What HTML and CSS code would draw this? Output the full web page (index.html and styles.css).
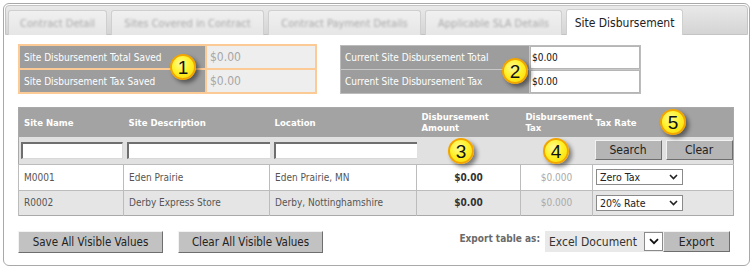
FILE: index.html
```html
<!DOCTYPE html>
<html>
<head>
<meta charset="utf-8">
<link rel="stylesheet" href="styles.css">
</head>
<body>
<div class="panel">
  <div class="tabbar">
    <div class="tab t1"><span>Contract Detail</span></div>
    <div class="tab t2"><span>Sites Covered in Contract</span></div>
    <div class="tab t3"><span>Contract Payment Details</span></div>
    <div class="tab t4"><span>Applicable SLA Details</span></div>
    <div class="tab active">Site Disbursement</div>
  </div>
  <div class="content">
    <div class="summary">
      <div class="box saved">
        <div class="lbl">Site Disbursement Total Saved</div><div class="val">$0.00</div>
        <div class="lbl">Site Disbursement Tax Saved</div><div class="val">$0.00</div>
      </div>
      <div class="box current">
        <div class="lbl">Current Site Disbursement Total</div><div class="val">$0.00</div>
        <div class="lbl">Current Site Disbursement Tax</div><div class="val">$0.00</div>
      </div>
    </div>
    <table class="grid">
      <colgroup>
        <col class="c1"><col class="c2"><col class="c3"><col class="c4"><col class="c5"><col class="c6">
      </colgroup>
      <thead>
        <tr class="head">
          <th>Site Name</th>
          <th>Site Description</th>
          <th>Location</th>
          <th>Disbursement<br>Amount</th>
          <th>Disbursement<br>Tax</th>
          <th class="rate">Tax Rate</th>
        </tr>
        <tr class="filter">
          <td class="f1"><span class="inp"></span></td>
          <td class="f2"><span class="inp"></span></td>
          <td class="f3"><span class="inp"></span></td>
          <td></td>
          <td></td>
          <td class="fbtns"><div class="btnrow"><span class="btn sbtn">Search</span><span class="btn sbtn">Clear</span></div></td>
        </tr>
      </thead>
      <tbody>
        <tr class="row">
          <td>M0001</td>
          <td>Eden Prairie</td>
          <td>Eden Prairie, MN</td>
          <td class="amt">$0.00</td>
          <td class="tax">$0.000</td>
          <td class="sel"><span class="select">Zero Tax<svg class="chev" width="9" height="6" viewBox="0 0 9 6"><path d="M1 1l3.5 3.5L8 1" fill="none" stroke="#222" stroke-width="1.6"/></svg></span></td>
        </tr>
        <tr class="row alt">
          <td>R0002</td>
          <td>Derby Express Store</td>
          <td>Derby, Nottinghamshire</td>
          <td class="amt">$0.00</td>
          <td class="tax">$0.000</td>
          <td class="sel"><span class="select">20% Rate<svg class="chev" width="9" height="6" viewBox="0 0 9 6"><path d="M1 1l3.5 3.5L8 1" fill="none" stroke="#222" stroke-width="1.6"/></svg></span></td>
        </tr>
      </tbody>
    </table>
    <div class="footer">
      <div class="actions">
        <span class="btn big">Save All Visible Values</span>
        <span class="btn big">Clear All Visible Values</span>
      </div>
      <div class="export">
        <span class="exlabel">Export table as:</span>
        <span class="exsel">Excel Document<span class="exchev"><svg width="10" height="7" viewBox="0 0 10 7"><path d="M1 1.2l4 4 4-4" fill="none" stroke="#111" stroke-width="1.8"/></svg></span></span>
        <span class="btn exbtn">Export</span>
      </div>
    </div>
  </div>
  <span class="badge b1">1</span>
  <span class="badge b2">2</span>
  <span class="badge b3">3</span>
  <span class="badge b4">4</span>
  <span class="badge b5">5</span>
</div>
</body>
</html>
```

FILE: styles.css
```css
html, body {
  margin: 0;
  padding: 0;
  background: #ffffff;
}
body {
  font-family: "DejaVu Sans Condensed", "DejaVu Sans", sans-serif;
  font-stretch: condensed;
  color: #444;
}
.panel {
  position: relative;
  margin: 3px 2px 0 3px;
  height: 261px;
  border: 1px solid #a9a9a9;
  border-radius: 6px;
  box-sizing: border-box;
  height: 263px;
}
.tabbar {
  display: flex;
  align-items: flex-end;
  gap: 4px;
  margin: 1px;
  height: 30px;
  box-sizing: border-box;
  padding: 0 0 0 2px;
  background: linear-gradient(#e9e9e9, #d4d4d4);
  border: 1px solid #c4c4c4;
  border-radius: 4px 4px 0 0;
}
.tab {
  height: 25px;
  box-sizing: border-box;
  margin-bottom: -1px;
  display: flex;
  align-items: center;
  justify-content: center;
  background: linear-gradient(#f0f0f0, #e6e6e6);
  border: 1px solid #cfcfcf;
  border-bottom: none;
  border-radius: 3px 3px 0 0;
  font-size: 11px;
  color: #a8a8a8;
}
.tab span {
  filter: blur(0.9px);
}
.t1 { width: 99px; }
.t2 { width: 153px; }
.t3 { width: 153px; }
.t4 { width: 137px; }
.tab.active {
  width: 117px;
  height: 26px;
  background: #ffffff;
  border-color: #cfcfcf;
  color: #222;
  font-size: 12px;
}
.content {
  padding: 8px 0 0 14px;
}
.summary {
  display: flex;
  gap: 23px;
}
.box {
  display: grid;
  font-size: 10px;
}
.saved {
  grid-template-columns: 185px 108px;
  grid-auto-rows: 22px;
  gap: 2px;
  padding: 2px;
  background: #fcca94;
}
.current {
  grid-template-columns: 188px 110px;
  grid-auto-rows: 23px;
  gap: 1px;
  margin-top: 1px;
  background: #c8c8c8;
  border: 1px solid #bcbcbc;
  height: 49px;
  box-sizing: border-box;
}
.lbl {
  background: #9d9d9d;
  color: #ffffff;
  display: flex;
  align-items: center;
  padding-left: 4px;
}
.val {
  display: flex;
  align-items: center;
  padding-left: 3px;
}
.saved .val {
  background: #eeeeee;
  color: #a6a6a6;
  font-size: 12px;
}
.current .val {
  background: #ffffff;
  color: #111;
  box-shadow: inset 0 0 0 1px #b5b5b5;
  padding-left: 2px;
}
.grid {
  margin-top: 13px;
  border-collapse: collapse;
  table-layout: fixed;
  width: 715px;
  font-size: 10px;
  border: 1px solid #a9a9a9;
}
.c1 { width: 105px; }
.c2 { width: 146px; }
.c3 { width: 147px; }
.c4 { width: 104px; }
.c5 { width: 72px; }
.c6 { width: 141px; }
.head th {
  background: #a3a3a3;
  color: #ffffff;
  font-weight: bold;
  font-size: 9.5px;
  text-align: left;
  height: 29px;
  padding: 0 5px;
  box-sizing: border-box;
  line-height: 11px;
  vertical-align: middle;
}
.head th.rate { padding-left: 3px; }
.filter td {
  background: #e1e1e1;
  height: 27px;
  padding: 0;
  vertical-align: middle;
}
.inp {
  display: block;
  height: 17px;
  box-sizing: border-box;
  background: #fff;
  border: 1px solid;
  border-color: #6f6f6f #d8d8d8 #d8d8d8 #6f6f6f;
  border-width: 2px 1px 1px 2px;
}
.f1 .inp { margin: 0 0 0 2px; width: 102px; }
.f2 .inp { margin: 0 0 0 3px; width: 146px; }
.f3 .inp { margin: 0 0 0 4px; width: 148px; }
.fbtns { padding: 0; }
.btnrow {
  display: flex;
  gap: 4px;
  padding-left: 2px;
}
.btn {
  display: inline-flex;
  align-items: center;
  justify-content: center;
  box-sizing: border-box;
  background: #bdbdbd;
  color: #222;
  border: 1px solid;
  border-color: #f2f2f2 #6e6e6e #6e6e6e #f2f2f2;
}
.sbtn {
  width: 67px;
  height: 20px;
  font-size: 12px;
  background: #b5b5b5;
}
.row td {
  height: 25px;
  padding: 0 5px;
  color: #555;
  border-left: 1px solid #bcbcbc;
  border-top: 1px solid #bcbcbc;
  background: #ffffff;
  white-space: nowrap;
  overflow: hidden;
}
.row.alt td { background: #e5e5e5; height: 24px; }
.row td.amt {
  text-align: center;
  font-weight: bold;
  color: #333;
}
.row td.tax {
  text-align: center;
  color: #aaaaaa;
}
.row td.sel { padding-left: 3px; }
.select {
  display: flex;
  align-items: center;
  justify-content: space-between;
  width: 87px;
  height: 16px;
  box-sizing: border-box;
  padding: 0 4px 0 3px;
  background: #fff;
  border: 1px solid #8a8a8a;
  color: #222;
  font-size: 10.5px;
}
.footer {
  display: flex;
  justify-content: space-between;
  align-items: center;
  margin-top: 15px;
  width: 712px;
}
.actions {
  display: flex;
  gap: 15px;
}
.big {
  width: 145px;
  height: 22px;
  font-size: 11.5px;
  background: #c2c2c2;
}
.export {
  display: flex;
  align-items: center;
}
.exlabel {
  font-weight: bold;
  color: #6a6a6a;
  font-size: 10px;
  margin-right: 5px;
  position: relative;
  top: -3px;
}
.exsel {
  display: inline-flex;
  align-items: center;
  justify-content: space-between;
  width: 118px;
  height: 21px;
  box-sizing: border-box;
  padding-left: 4px;
  background: #e9e9e9;
  color: #333;
  font-size: 12px;
}
.exchev {
  display: inline-flex;
  align-items: center;
  justify-content: center;
  width: 19px;
  height: 19px;
  box-sizing: border-box;
  background: #fff;
  border: 1px solid #8a8a8a;
}
.exbtn {
  width: 67px;
  height: 21px;
  font-size: 12px;
  background: #bebebe;
}
.badge {
  position: absolute;
  width: 26px;
  height: 26px;
  box-sizing: border-box;
  border-radius: 50%;
  border: 2px solid #f2a500;
  background: radial-gradient(circle at 40% 35%, #fffb9a 0%, #fff22a 45%, #f8d400 100%);
  box-shadow: 3px 3px 4px rgba(0, 0, 0, 0.45);
  display: flex;
  align-items: center;
  justify-content: center;
  font-family: "Liberation Sans", Arial, sans-serif;
  font-size: 19px;
  color: #111;
  line-height: 1;
}
.b1 { left: 166px; top: 50px; }
.b2 { left: 498px; top: 54px; }
.b3 { left: 444px; top: 134px; }
.b4 { left: 539px; top: 134px; }
.b5 { left: 656px; top: 105px; }
```
